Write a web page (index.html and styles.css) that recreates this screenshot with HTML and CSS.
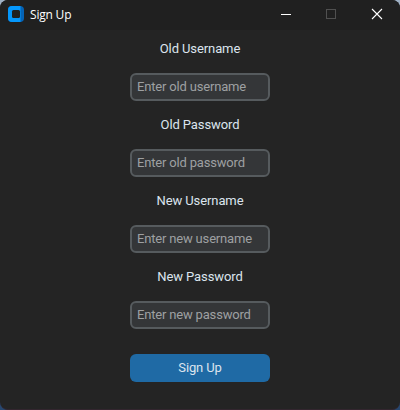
FILE: index.html
```html
<!DOCTYPE html>
<html lang="en">
<head>
<meta charset="utf-8">
<title>Sign Up</title>
<link rel="stylesheet" href="styles.css">
</head>
<body>
<div class="window">
  <header class="titlebar">
    <svg class="app-icon" width="16" height="16" viewBox="0 0 16 16">
      <rect width="16" height="16" rx="4" fill="#0563b5"/>
      <path d="M4 0H12.500V16H4A4 4 0 0 1 0 12V4A4 4 0 0 1 4 0Z" fill="#0597fb"/>
      <rect x="4" y="4" width="8" height="8" rx="1.500" fill="#202020"/>
    </svg>
    <span class="title">Sign Up</span>
    <div class="controls">
      <svg width="46" height="30" viewBox="0 0 46 30"><path d="M19 14.500H29" stroke="#fff"/></svg>
      <svg width="46" height="30" viewBox="0 0 46 30"><rect x="18.500" y="9.500" width="9" height="9" fill="none" stroke="#505050"/></svg>
      <svg width="46" height="30" viewBox="0 0 46 30"><path d="M18 9L28 19M28 9L18 19" stroke="#fff" stroke-width="1.100"/></svg>
    </div>
  </header>
  <form class="form">
    <label class="label" for="old-user">Old Username</label>
    <input class="entry" id="old-user" placeholder="Enter old username">
    <label class="label" for="old-pass">Old Password</label>
    <input class="entry" id="old-pass" placeholder="Enter old password">
    <label class="label" for="new-user">New Username</label>
    <input class="entry" id="new-user" placeholder="Enter new username">
    <label class="label" for="new-pass">New Password</label>
    <input class="entry" id="new-pass" placeholder="Enter new password">
    <button class="submit" type="button">Sign Up</button>
  </form>
</div>
</body>
</html>
```
FILE: styles.css
```css
* {
  box-sizing: border-box;
}

body {
  margin: 0;
  background: linear-gradient(#9fb0c4 0 50%, #27476f 50%);
  font: 13px Roboto, sans-serif;
}

.window {
  height: 410px;
  overflow: hidden;
  border-radius: 8px;
  border-bottom: 1px solid #33262f;
  background: #242424;
}

.titlebar {
  display: flex;
  align-items: center;
  height: 30px;
  padding-left: 8px;
  background: #202020;
}

.app-icon {
  margin-bottom: 2px;
}

.title {
  margin: 0 0 1px 6px;
  color: #fff;
  font: 12px "Open Sans", sans-serif;
  letter-spacing: -0.2px;
}

.controls {
  display: flex;
  margin-left: auto;
}

.form {
  display: flex;
  flex-direction: column;
  align-items: center;
  gap: 10px;
  padding-top: 5px;
}

.label {
  height: 28px;
  line-height: 28px;
  letter-spacing: -0.1px;
  color: #dce4ee;
}

.entry {
  width: 140px;
  height: 28px;
  padding: 0 5px 2px;
  border: 2px solid #565b5e;
  border-radius: 6px;
  outline: 0;
  background: #343638;
  color: #dce4ee;
  font: inherit;
  letter-spacing: -0.18px;
}

.entry::placeholder {
  color: #9ea0a2;
}

.submit {
  width: 140px;
  height: 28px;
  margin-top: 15px;
  padding: 0 0 2px;
  border: 0;
  border-radius: 6px;
  background: #1f6aa5;
  color: #dce4ee;
  font: inherit;
  letter-spacing: -0.15px;
}
```
